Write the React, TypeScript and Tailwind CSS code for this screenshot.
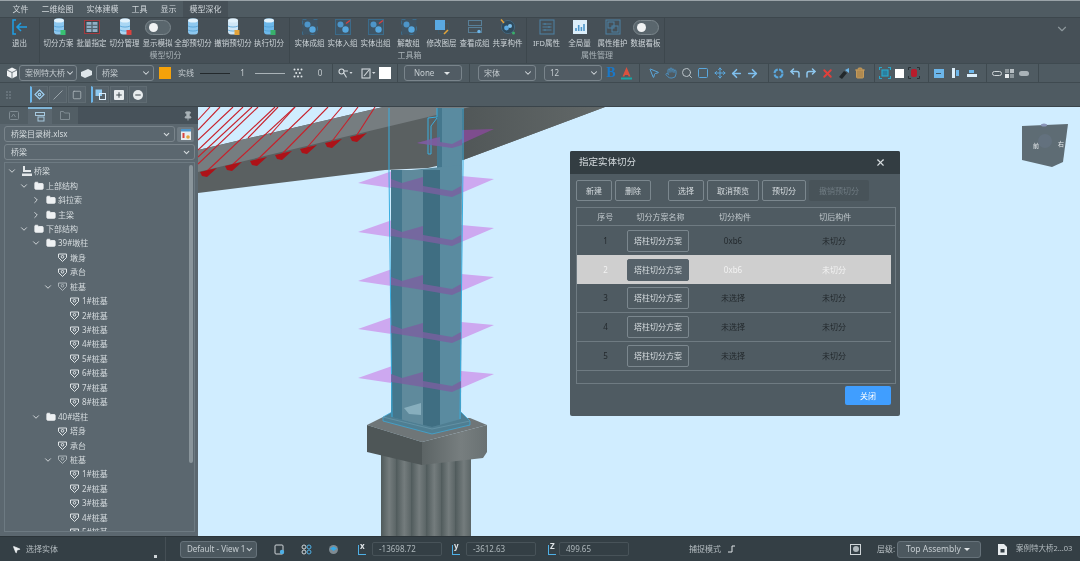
import React from 'react';
import {
  ArrowLeft, ArrowRight, ChevronDown, ChevronRight, CornerUpLeft, CornerUpRight, Folder, Hand, Minus, MousePointer2,
  Move, Pin, Plus, Search, Slash, Square, Trash2, X,
} from 'lucide-react';

function Cyl({ body = '#8ec8ef', badge }: { body?: string; badge?: string }) {
  return (
    <svg width="16" height="18" viewBox="0 0 16 18">
      <rect x="3" y="0.5" width="10" height="16" rx="3" fill={body} />
      <ellipse cx="8" cy="2.5" rx="5" ry="2" fill="#e2f2fc" />
      <path d="M3 8c2 1.4 8 1.4 10 0M3 12c2 1.4 8 1.4 10 0" stroke="#4f9fd6" strokeWidth="0.8" fill="none" />
      {badge && <rect x="9.5" y="12" width="5" height="5" fill={badge} />}
    </svg>
  );
}

function Batch() {
  return (
    <svg width="16" height="16" viewBox="0 0 16 16">
      <rect x="0.5" y="1.5" width="15" height="13" fill="#3c474d" stroke="#a33a3f" />
      <rect x="2.5" y="3" width="5" height="10" fill="#8fb0c6" />
      <rect x="8.5" y="3" width="5" height="10" fill="#8fb0c6" />
      <path d="M2.5 6.3h5M2.5 9.6h5M8.5 6.3h5M8.5 9.6h5" stroke="#3c474d" strokeWidth="0.8" />
    </svg>
  );
}

function GroupIcon({ mark }: { mark?: string }) {
  return (
    <svg width="16" height="16" viewBox="0 0 16 16">
      <rect x="0.5" y="0.5" width="15" height="15" fill="#3f5565" stroke="#3b6b8a" strokeDasharray={mark ? undefined : '4 7'} />
      <circle cx="5.5" cy="5.5" r="3" fill="#4d95c9" />
      <circle cx="10.5" cy="10.5" r="3.2" fill="#56a7de" />
      {mark && <path d="M11 4.5l4-3" stroke={mark} strokeWidth="1.4" />}
    </svg>
  );
}

function LayerIcon() {
  return (
    <svg width="16" height="16" viewBox="0 0 16 16">
      <rect x="4.5" y="4.5" width="10" height="10" fill="none" stroke="#3d5664" />
      <rect x="1" y="1" width="10" height="10" fill="#5aa9e2" />
      <path d="M10 15l4-4" stroke="#e3a33a" strokeWidth="1.6" />
    </svg>
  );
}

function ViewGroupIcon() {
  return (
    <svg width="16" height="16" viewBox="0 0 16 16" fill="none" stroke="#587f98">
      <rect x="1.5" y="1.5" width="13" height="5" />
      <rect x="1.5" y="8.5" width="13" height="5" />
      <circle cx="12" cy="12.5" r="1.7" fill="#6cb6ea" stroke="none" />
    </svg>
  );
}

function ShareIcon() {
  return (
    <svg width="18" height="18" viewBox="0 0 18 18">
      <circle cx="9" cy="9" r="6.6" fill="#2f4a5c" stroke="#43657b" />
      <circle cx="7.5" cy="10" r="2.4" fill="#5aa9e2" />
      <circle cx="11" cy="8" r="2" fill="#7cc0ec" />
      <path d="M2 1.5l3 3.5" stroke="#e3a33a" strokeWidth="1.5" />
      <circle cx="14.5" cy="15" r="1.5" fill="#38b06b" />
    </svg>
  );
}

function PropIcon({ kind }: { kind: 'ifd' | 'chart' | 'keep' }) {
  if (kind === 'chart') {
    return (
      <svg width="16" height="16" viewBox="0 0 16 16">
        <rect x="1" y="1" width="14" height="14" fill="#dceefa" />
        <path d="M4 12V9M6.7 12V6M9.4 12V8M12 12V5" stroke="#4d95c9" strokeWidth="1.6" />
      </svg>
    );
  }
  return (
    <svg width="16" height="16" viewBox="0 0 16 16" fill="none" stroke="#4d7f9f" strokeWidth="1.1">
      <rect x="1" y="1" width="14" height="14" />
      {kind === 'ifd' ? (
        <path d="M3.5 5h9M3.5 8h9M3.5 11h9M6 4v2M10 7v2M6 10v2" />
      ) : (
        <>
          <rect x="3" y="3" width="6" height="6" />
          <rect x="7" y="7" width="6" height="6" />
        </>
      )}
    </svg>
  );
}

function Toggle() {
  return (
    <div className="flex h-[15px] w-[26px] items-center rounded-full border border-[#7b868c] bg-[#5a666d] pl-[3px]">
      <div className="h-[9px] w-[9px] rounded-full bg-[#f1f3f4]" />
    </div>
  );
}

const groupOne: [string, React.ReactNode, string][] = [
  ['切分方案', <Cyl badge="#38c172" />, 'w-[33px]'],
  ['批量指定', <Batch />, 'w-[33px]'],
  ['切分管理', <Cyl body="#a9d6f3" badge="#d9423f" />, 'w-[33px]'],
  ['显示模拟', <Toggle />, 'w-[33px]'],
  ['全部预切分', <Cyl />, 'w-[38px]'],
  ['撤销预切分', <Cyl body="#cfe6f6" badge="#e3a33a" />, 'w-[42px]'],
  ['执行切分', <Cyl body="#6db8ea" badge="#38b06b" />, 'w-[30px]'],
];

const groupTwo: [string, React.ReactNode][] = [
  ['实体成组', <GroupIcon />],
  ['实体入组', <GroupIcon mark="#d9423f" />],
  ['实体出组', <GroupIcon mark="#d9423f" />],
  ['解散组', <GroupIcon />],
  ['修改图层', <LayerIcon />],
  ['查看成组', <ViewGroupIcon />],
  ['共享构件', <ShareIcon />],
];

const groupThree: [string, React.ReactNode][] = [
  ['IFD属性', <PropIcon kind="ifd" />],
  ['全局量', <PropIcon kind="chart" />],
  ['属性维护', <PropIcon kind="keep" />],
  ['数据看板', <Toggle />],
];

function RibbonItem({ label, icon, width = 'w-[33px]' }: { label: string; icon: React.ReactNode; width?: string }) {
  return (
    <div className={`flex flex-col items-center ${width}`}>
      <div className="flex h-[18px] items-center justify-center">{icon}</div>
      <div className="mt-[1px] whitespace-nowrap text-[7.5px] leading-[12px] text-[#cdd4d8]">{label}</div>
    </div>
  );
}

function RibbonGroup({ title, children, padding }: { title: string; children: React.ReactNode; padding: string }) {
  return (
    <div className={`flex h-full flex-col border-r border-[#3d474d] ${padding}`}>
      <div className="flex">{children}</div>
      <div className="text-center text-[8px] leading-[12px] text-[#aab3b8]">{title}</div>
    </div>
  );
}

function Select({ label, width, caret = 'chevron', center }: { label: string; width: string; caret?: string; center?: boolean }) {
  return (
    <div className={`flex h-[16px] shrink-0 items-center justify-between rounded-[3px] border border-[#79848b] bg-[#55616850] pl-[4px] pr-[2px] text-[8px] text-[#c5ccd0] ${width}`}>
      <span className={`whitespace-nowrap ${center ? 'pl-[5px]' : 'pl-[1px]'}`}>{label}</span>
      {caret === 'chevron' ? (
        <ChevronDown size={10} strokeWidth={2.5} className="shrink-0 text-[#d6dcdf]" />
      ) : (
        <span className="mr-[9px] h-0 w-0 border-x-[3px] border-t-[3px] border-x-transparent border-t-[#e0e4e6]" />
      )}
    </div>
  );
}

function Sep({ margin }: { margin: string }) {
  return <div className={`h-full w-px shrink-0 bg-[#3f4a50] ${margin}`} />;
}

function Slot({ width, children }: { width: string; children: React.ReactNode }) {
  return <div className={`flex shrink-0 items-center justify-center ${width}`}>{children}</div>;
}

const blue = '#5aa7dc';

function ToolbarOne() {
  return (
    <div className="flex h-[20px] shrink-0 items-center border-b border-t border-[#3f4a50] bg-[#4f5b62] text-[8px] text-[#c5ccd0]">
      <svg width="12" height="12" viewBox="0 0 12 12" className="ml-[6px] shrink-0">
        <path d="M6 .5l5 2.5v6l-5 2.5L1 9V3z" fill="#f0f3f5" />
        <path d="M1 3l5 2.5L11 3M6 5.5v6" stroke="#4f5b62" strokeWidth=".8" fill="none" />
      </svg>
      <div className="ml-[1px]"><Select label="案例特大桥" width="w-[58px]" /></div>
      <Slot width="w-[19px]">
        <svg width="11" height="9" viewBox="0 0 11 9"><path d="M0 3l7-3 4 2v4l-7 3-4-2z" fill="#dfe6ea" /></svg>
      </Slot>
      <Select label="桥梁" width="w-[58px]" />
      <div className="ml-[5px] h-[12px] w-[12px] shrink-0 bg-[#f5a20a]" />
      <span className="ml-[7px] w-[16px] shrink-0 whitespace-nowrap">实线</span>
      <div className="ml-[6px] h-px w-[30px] shrink-0 bg-[#23292c]" />
      <span className="w-[25px] shrink-0 text-center">1</span>
      <div className="h-px w-[30px] shrink-0 bg-[#aab3b8]" />
      <Slot width="w-[26px]">
        <svg width="10" height="10" viewBox="0 0 10 10" fill="#dfe4e7">
          <circle cx="1.5" cy="1.5" r="1" /><circle cx="5" cy="1.5" r="1" /><circle cx="8.5" cy="1.5" r="1" />
          <circle cx="3.2" cy="5" r="1" /><circle cx="6.8" cy="5" r="1" />
          <circle cx="1.5" cy="8.5" r="1" /><circle cx="5" cy="8.5" r="1" /><circle cx="8.5" cy="8.5" r="1" />
        </svg>
      </Slot>
      <span className="w-[18px] shrink-0 text-center">0</span>
      <Sep margin="ml-[3px]" />
      <Slot width="w-[24px]">
        <svg width="15" height="11" viewBox="0 0 15 11" fill="none" stroke="#d4dade" strokeWidth="1.1">
          <circle cx="3.5" cy="3.5" r="2.5" /><path d="M5.5 4.5l3 5M6 3h4" /><path d="M11.5 4h3l-1.5 2z" fill="#d4dade" stroke="none" />
        </svg>
      </Slot>
      <Slot width="w-[22px]">
        <svg width="15" height="11" viewBox="0 0 15 11" fill="none" stroke="#d4dade" strokeWidth="1.1">
          <rect x="1" y="1" width="8" height="9" /><path d="M3 8l5-6" /><path d="M11 4h3.5l-1.7 2z" fill="#d4dade" stroke="none" />
        </svg>
      </Slot>
      <div className="h-[12px] w-[12px] shrink-0 bg-white" />
      <Sep margin="ml-[6px]" />
      <div className="ml-[6px]"><Select label="None" width="w-[58px]" caret="tri" center /></div>
      <Sep margin="ml-[7px]" />
      <div className="ml-[8px]"><Select label="宋体" width="w-[58px]" /></div>
      <div className="ml-[8px]"><Select label="12" width="w-[58px]" /></div>
      <Slot width="w-[18px]"><span className="font-['Liberation_Serif',serif] text-[14px] font-bold leading-none text-[#1a78c8]">B</span></Slot>
      <Slot width="w-[12px]">
        <svg width="11" height="13" viewBox="0 0 11 13">
          <path d="M5.5 0l4 9.5H7.6L7 8H4l-.6 1.5H1.5z" fill="#d9523f" /><rect y="10.5" width="11" height="2" fill="#1aa6a6" />
        </svg>
      </Slot>
      <Sep margin="ml-[7px]" />
      <div className="ml-[6px] flex shrink-0">
        <Slot width="w-[16.4px]"><MousePointer2 size={12} color={blue} /></Slot>
        <Slot width="w-[16.4px]"><Hand size={12} color="#4d8fbd" /></Slot>
        <Slot width="w-[16.4px]"><Search size={12} color="#b9c2c7" /></Slot>
        <Slot width="w-[16.4px]"><Square size={12} color={blue} strokeWidth={2} /></Slot>
        <Slot width="w-[16.4px]"><Move size={12} color={blue} /></Slot>
        <Slot width="w-[16.4px]"><ArrowLeft size={13} color="#7fc0ee" strokeWidth={3} /></Slot>
        <Slot width="w-[16.4px]"><ArrowRight size={13} color="#7fc0ee" strokeWidth={3} /></Slot>
      </div>
      <Sep margin="ml-[7px]" />
      <div className="ml-[2px] flex shrink-0">
        <Slot width="w-[16.3px]">
          <svg width="11" height="11" viewBox="0 0 11 11" fill="none" stroke={blue} strokeWidth="2"><circle cx="5.5" cy="5.5" r="4" strokeDasharray="5 1.3" /></svg>
        </Slot>
        <Slot width="w-[16.3px]"><CornerUpLeft size={12} color="#8ec8ef" strokeWidth={3} /></Slot>
        <Slot width="w-[16.3px]"><CornerUpRight size={12} color="#8ec8ef" strokeWidth={3} /></Slot>
        <Slot width="w-[16.3px]"><X size={13} color="#e0403c" strokeWidth={3.5} /></Slot>
        <Slot width="w-[16.3px]">
          <svg width="11" height="11" viewBox="0 0 11 11"><path d="M0 9l5-6 3 2-5 6z" fill="#22282b" /><path d="M6 2l4-2v5z" fill="#6cb6ea" /></svg>
        </Slot>
        <Slot width="w-[16.3px]"><Trash2 size={12} color="#c49a5a" fill="#b08a50" /></Slot>
      </div>
      <Sep margin="ml-[5px]" />
      <div className="ml-[3px] flex shrink-0 items-center">
        <Slot width="w-[15px]">
          <svg width="12" height="12" viewBox="0 0 12 12" fill="none" stroke="#2ba6c9" strokeWidth="1.2">
            <path d="M0.5 3V.5H3M9 .5h2.5V3M11.5 9v2.5H9M3 11.5H.5V9" /><rect x="3" y="3" width="6" height="6" fill="#2b7f9f" />
          </svg>
        </Slot>
        <Slot width="w-[14px]"><div className="h-[9px] w-[9px] bg-white" /></Slot>
        <Slot width="w-[14px]">
          <svg width="12" height="12" viewBox="0 0 12 12"><path d="M.5 3V.5H3M9 .5h2.5V3M11.5 9v2.5H9M3 11.5H.5V9" fill="none" stroke="#2b3236" /><rect x="3" y="2" width="6" height="8" rx="2" fill="#b91c2c" /></svg>
        </Slot>
      </div>
      <Sep margin="ml-[7px]" />
      <div className="ml-[2px] flex shrink-0 items-center">
        <Slot width="w-[16.5px]"><div className="flex h-[9px] w-[10px] items-center justify-center bg-[#6cb6ea]"><div className="h-px w-[5px] bg-[#3f5565]" /></div></Slot>
        <Slot width="w-[16.5px]"><div className="flex items-center gap-[1px]"><div className="h-[10px] w-[3px] bg-[#dceefa]" /><div className="h-[6px] w-[3px] bg-[#6cb6ea]" /></div></Slot>
        <Slot width="w-[16.5px]"><div className="flex flex-col items-center gap-[1px]"><div className="h-[3px] w-[5px] bg-[#6cb6ea]" /><div className="h-[3px] w-[10px] bg-[#dceefa]" /></div></Slot>
      </div>
      <Sep margin="ml-[6px]" />
      <div className="ml-[3px] flex shrink-0 items-center">
        <Slot width="w-[13px]"><div className="h-[5px] w-[10px] rounded-full border border-[#cfd5d8]" /></Slot>
        <Slot width="w-[13px]">
          <div className="grid grid-cols-2 gap-[1px]">
            <div className="h-[4px] w-[4px] bg-[#8d979c]" /><div className="h-[4px] w-[4px] bg-[#b8c0c4]" /><div className="h-[4px] w-[4px] bg-[#e8ecee]" /><div className="h-[4px] w-[4px] bg-[#8d979c]" />
          </div>
        </Slot>
        <Slot width="w-[15px]"><div className="h-[5px] w-[10px] rounded-full bg-[#aab3b8]" /></Slot>
      </div>
      <Sep margin="ml-[7px]" />
    </div>
  );
}

function SmallButton({ children, active }: { children: React.ReactNode; active?: boolean }) {
  return (
    <div className={`flex h-[17px] w-[18px] items-center justify-center border-[#5f6b72] ${active ? 'border-l-2 border-l-[#6cb6ea]' : ''} border bg-[#56626a]`}>
      {children}
    </div>
  );
}

function ToolbarTwo() {
  return (
    <div className="flex h-[24px] shrink-0 items-center border-b border-[#3a444a] bg-[#4f5b62] pl-[6px]">
      <div className="grid w-[5px] grid-cols-2 gap-[1px]">
        {[0, 1, 2, 3, 4, 5].map((i) => <div key={i} className="h-[2px] w-[2px] bg-[#66727a]" />)}
      </div>
      <div className="ml-[19px] flex gap-px">
        <SmallButton active>
          <svg width="11" height="11" viewBox="0 0 11 11" fill="none" stroke="#9fd0f2" strokeWidth="1.2"><path d="M5.5 1l4.5 4.5L5.5 10 1 5.5z" /><circle cx="5.5" cy="5.5" r="1.2" /></svg>
        </SmallButton>
        <SmallButton><Slash size={10} color="#aab3b8" /></SmallButton>
        <SmallButton><Square size={10} color="#aab3b8" /></SmallButton>
      </div>
      <div className="ml-[5px] flex gap-px">
        <SmallButton active>
          <svg width="11" height="11" viewBox="0 0 11 11"><rect x=".5" y=".5" width="6.5" height="6.5" fill="#8ec8ef" /><rect x="4.5" y="4.5" width="6" height="6" fill="none" stroke="#dceefa" /></svg>
        </SmallButton>
        <SmallButton><div className="flex h-[10px] w-[10px] items-center justify-center rounded-[1px] bg-[#e8ecee]"><Plus size={8} color="#3c474d" strokeWidth={3} /></div></SmallButton>
        <SmallButton><div className="flex h-[10px] w-[10px] items-center justify-center rounded-full bg-[#e8ecee]"><Minus size={8} color="#3c474d" strokeWidth={3} /></div></SmallButton>
      </div>
    </div>
  );
}

type TreeRow = [number, 'open' | 'closed' | null, 'root' | 'folder' | 'group' | 'part', string];

const pileRows = (n: number): TreeRow[] =>
  Array.from({ length: n }, (_, i) => [4, null, 'part', `${i + 1}#桩基`] as TreeRow);

const treeRows: TreeRow[] = [
  [0, 'open', 'root', '桥梁'],
  [1, 'open', 'folder', '上部结构'],
  [2, 'closed', 'folder', '斜拉索'],
  [2, 'closed', 'folder', '主梁'],
  [1, 'open', 'folder', '下部结构'],
  [2, 'open', 'folder', '39#墩柱'],
  [3, null, 'part', '墩身'],
  [3, null, 'part', '承台'],
  [3, 'open', 'group', '桩基'],
  ...pileRows(8),
  [2, 'open', 'folder', '40#塔柱'],
  [3, null, 'part', '塔身'],
  [3, null, 'part', '承台'],
  [3, 'open', 'group', '桩基'],
  ...pileRows(5),
];

function TreeIcon({ kind }: { kind: TreeRow[2] }) {
  if (kind === 'folder') return <Folder size={10} color="#eef1f3" fill="#eef1f3" />;
  if (kind === 'root') {
    return (
      <svg width="10" height="10" viewBox="0 0 10 10" fill="#e4e8ea">
        <rect x="1" y="0" width="2" height="6" /><rect x="1" y="4" width="8" height="2" /><rect x="0" y="7.5" width="10" height="2.5" />
      </svg>
    );
  }
  return (
    <svg width="9" height="9" viewBox="0 0 9 9" fill="none" stroke={kind === 'part' ? '#dfe4e7' : '#aab3b8'} strokeWidth="1">
      <path d="M.5 1h8v3.5L4.5 8.5.5 4.5z" />
      <circle cx="4.5" cy="3.8" r="1.3" />
    </svg>
  );
}

function Sidebar() {
  return (
    <div className="flex h-full w-[198px] shrink-0 flex-col bg-[#5b676f] pb-[4px]">
      <div className="flex h-[17px] shrink-0 items-stretch bg-[#47525a]">
        <div className="flex w-[28px] items-center justify-center bg-[#525e65]">
          <svg width="10" height="9" viewBox="0 0 10 9" fill="none" stroke="#7f8b92"><rect x=".5" y=".5" width="9" height="8" rx="1" /><path d="M2.5 6l2-3 2 3" /></svg>
        </div>
        <div className="flex w-[24px] items-center justify-center border-t-2 border-[#7fb4d6] bg-[#5b676f]">
          <svg width="10" height="10" viewBox="0 0 10 10" fill="none" stroke="#a6c8de"><rect x=".5" y=".5" width="9" height="3" /><rect x="3" y="5" width="6" height="4" /></svg>
        </div>
        <div className="flex w-[26px] items-center justify-center bg-[#525e65]">
          <svg width="10" height="9" viewBox="0 0 10 9" fill="none" stroke="#7f8b92"><path d="M.5 8.5v-8h3l1 1.5h5v6.5z" /></svg>
        </div>
        <div className="ml-auto mr-[5px] flex items-center"><Pin size={10} color="#aab3b8" fill="#aab3b8" /></div>
      </div>
      <div className="ml-[4px] mt-[2px] flex h-[16px] shrink-0 items-center">
        <div className="flex h-[16px] w-[171px] items-center justify-between rounded-[3px] border border-[#79848b] pl-[6px] pr-[3px] text-[8px] text-[#d6dcdf]">
          <span>桥梁目录树.xlsx</span><ChevronDown size={9} strokeWidth={3} />
        </div>
        <div className="ml-[2px] flex h-[15px] w-[17px] items-center justify-center rounded-[2px] bg-[#6f7b83]">
          <svg width="10" height="11" viewBox="0 0 10 11"><rect width="10" height="11" fill="#e8ecee" /><rect width="10" height="2.5" fill="#4d95c9" /><rect x="1.5" y="4" width="2" height="5" fill="#d9423f" /><circle cx="7" cy="8" r="1.8" fill="#e3a33a" /></svg>
        </div>
      </div>
      <div className="ml-[4px] mt-[2px] flex h-[16px] w-[191px] shrink-0 items-center justify-between rounded-[3px] border border-[#79848b] pl-[6px] pr-[3px] text-[8px] text-[#d6dcdf]">
        <span>桥梁</span><ChevronDown size={9} strokeWidth={3} />
      </div>
      <div className="relative ml-[4px] mt-[2px] w-[191px] flex-1 overflow-hidden border border-[#6d7a82] pt-[1px]">
        {treeRows.map(([level, state, kind, label], i) => (
          <div key={i} className="flex h-[14.45px] items-center text-[8px] text-[#d6dcdf]" style={{ paddingLeft: 2 + 12 * level }}>
            <div className="flex w-[10px] shrink-0 justify-center">
              {state === 'open' && <ChevronDown size={10} color="#e4e8ea" />}
              {state === 'closed' && <ChevronRight size={10} color="#e4e8ea" />}
            </div>
            <div className="flex w-[17px] shrink-0 justify-center pl-[2px]"><TreeIcon kind={kind} /></div>
            <span className="whitespace-nowrap">{label}</span>
          </div>
        ))}
        <div className="absolute left-[184px] top-[2px] h-[298px] w-[4px] rounded-full bg-[#8a959b]" />
      </div>
    </div>
  );
}

// anchor on the deck and where its cable leaves the top of the view
const anchors: [number, number, number][] = [
  [205, 173, 275], [230, 167, 295], [255, 162, 312], [280, 156, 328], [305, 150, 342], [330, 144, 358], [355, 138, 375],
];
const extraCables = [
  [198, 164, 258], [198, 150, 243], [198, 140, 233], [198, 130, 220], [198, 120, 210], [248, 138, 278], [270, 135, 295], [198, 157, 252],
];
const planeYs = [182, 231, 280, 328, 377];
const pileEdges = [381, 396, 411, 426, 441, 455, 471];

function Scene() {
  return (
    <svg viewBox="198 107 882 429" className="absolute inset-0 h-full w-full">
      <defs>
        <linearGradient id="pile" x1="0" x2="1" y1="0" y2="0">
          <stop offset="0" stopColor="#4f5a5b" />
          <stop offset="0.55" stopColor="#747c7d" />
          <stop offset="1" stopColor="#5b6566" />
        </linearGradient>
        <linearGradient id="capRight" x1="0" x2="1" y1="0" y2="0">
          <stop offset="0" stopColor="#5c6465" />
          <stop offset="0.6" stopColor="#777e7f" />
          <stop offset="1" stopColor="#697172" />
        </linearGradient>
        <linearGradient id="deckRight" x1="0" x2="1" y1="0" y2="0">
          <stop offset="0" stopColor="#4e5455" />
          <stop offset="1" stopColor="#626868" />
        </linearGradient>
        <clipPath id="towerBody"><polygon points="391,160 462,160 461,419 432,427 391,417" /></clipPath>
      </defs>

      <polygon points="198,150 383,107 605,107 463,160 428,168 385,170 198,193" fill="#5a6061" />
      <polygon points="463,160 437,107 605,107" fill="url(#deckRight)" />
      <polygon points="198,150 383,107 470,107 198,172" fill="#767d80" />

      <g stroke="#c8202a" strokeWidth="1.1" fill="none">
        {anchors.map(([x, y, top]) => <path key={x} d={`M${x} ${y}L${top} 107`} />)}
        {extraCables.map(([x, y, top]) => <path key={`${x}-${y}`} d={`M${x} ${y}L${top} 107`} />)}
      </g>
      {anchors.map(([x, y]) => (
        <polygon key={x} points={`${x - 5},${y - 1} ${x + 12},${y - 5} ${x + 2},${y + 4} ${x - 3},${y + 3}`} fill="#ad1218" />
      ))}

      {/* section planes, the tower hides their middle */}
      <polygon points="417,143 463,130 494,129 452,148" fill="#7e4d8e" />
      {planeYs.map((y) => (
        <polygon key={y} points={`358,${y + 1} 395,${y - 12} 494,${y - 3} 452,${y + 15}`} fill="#cda8f0" />
      ))}

      {/* piles and cap */}
      {pileEdges.slice(0, -1).map((x, i) => (
        <rect key={x} x={x} y="455" width={pileEdges[i + 1] - x} height="81" fill="url(#pile)" />
      ))}
      <polygon points="367,425 383,417 470,418 487,425 422,442" fill="#6f7678" />
      <polygon points="367,425 422,442 422,465 367,452" fill="#4e5657" />
      <polygon points="422,442 487,425 487,452 483,458 422,465" fill="url(#capRight)" />
      <polygon points="383,417 392,412 461,412 470,421 470,425 432,434 383,421" fill="#4f7e92" stroke="#39aee0" strokeWidth="0.7" />
      <path d="M383 417L432 429L470 421" stroke="#6a99ac" strokeWidth="0.7" fill="none" />

      {/* pier */}
      <rect x="437" y="108" width="25" height="62" fill="#5a8ba0" />
      <rect x="437" y="108" width="5" height="62" fill="#44778d" />
      <g clipPath="url(#towerBody)">
        <polygon points="391,172 462,165 462,430 391,430" fill="#5a8ba0" />
        <rect x="391" y="170" width="12" height="260" fill="#44778d" />
        <rect x="402" y="170" width="21" height="260" fill="#5f8a9c" />
        <rect x="423" y="170" width="17" height="260" fill="#3f6e82" />
      </g>
      <polygon points="404,408 421,403 421,415 409,414" fill="#87aebd" />
      <path d="M389 108V172L392 417M463 108V165L460 419" stroke="#39aee0" fill="none" />
      <path d="M437 108V117L428 118V154H431V126L437 118" stroke="#39aee0" fill="none" />

      {planeYs.map((y) => (
        <polygon
          key={y}
          points={`391,${y - 3} 402,${y + 1} 423,${y - 5} 423,${y + 4} 452,${y + 9} 461,${y + 4} 461,${y + 11} 452,${y + 15} 423,${y + 10} 391,${y + 5}`}
          fill="#7a5fa0"
          opacity="0.8"
        />
      ))}
      <polygon points="417,143 440,137 440,142 452,144 462,139 462,145 452,148" fill="#7a5fa0" opacity="0.85" />

      {/* view cube */}
      <polygon points="1022,126 1068,124 1063,162 1052,167 1022,160" fill="#5e6c74" />
      <circle cx="1045" cy="141" r="7" fill="#63717e" />
      <ellipse cx="1044" cy="125" rx="3" ry="1.5" fill="#8a95b8" />
      <text x="1033" y="148" fontSize="6" fill="#e8ecee">前</text>
      <text x="1058" y="146" fontSize="6" fill="#e8ecee">右</text>
    </svg>
  );
}

const buttonBase = 'flex h-[21px] items-center justify-center rounded-[2px] border border-[#7b878e] text-[8px] text-[#d6dcdf]';

const tableRows = [
  ['1', '0xb6', '未切分'],
  ['2', '0xb6', '未切分'],
  ['3', '未选择', '未切分'],
  ['4', '未选择', '未切分'],
  ['5', '未选择', '未切分'],
];

function CutDialog() {
  return (
    <div className="absolute left-[372px] top-[44px] flex h-[265px] w-[330px] flex-col rounded-[2px] bg-[#4f5b62] font-['Noto_Sans','Noto_Sans_CJK_SC',sans-serif]">
      <div className="flex h-[23px] shrink-0 items-center justify-between rounded-t-[2px] bg-[#333d42] pl-[9px] pr-[14px]">
        <span className="text-[9.5px] text-[#d6dcdf]">指定实体切分</span>
        <X size={11} color="#d6dcdf" strokeWidth={2.5} />
      </div>
      <div className="ml-[6px] mt-[6px] flex">
        <div className={`${buttonBase} w-[36px]`}>新建</div>
        <div className={`${buttonBase} ml-[3px] w-[36px]`}>删除</div>
        <div className={`${buttonBase} ml-[17px] w-[36px]`}>选择</div>
        <div className={`${buttonBase} ml-[3px] w-[52px]`}>取消预览</div>
        <div className={`${buttonBase} ml-[3px] w-[44px]`}>预切分</div>
        <div className="ml-[3px] flex h-[21px] w-[60px] items-center justify-center rounded-[2px] bg-[#485359] text-[8px] text-[#6f7b82]">撤销预切分</div>
      </div>
      <div className="ml-[6px] mt-[6px] h-[177px] w-[320px] border border-[#6f7b82] text-[8px]">
        <div className="flex h-[18px] items-center border-b border-[#6f7b82] text-[#c0c8cc]">
          <div className="w-[50px] pl-[7px] text-center">序号</div>
          <div className="w-[68px] text-center">切分方案名称</div>
          <div className="w-[82px] text-center">切分构件</div>
          <div className="w-[120px] text-center">切后构件</div>
        </div>
        {tableRows.map(([no, part, after], i) => {
          const selected = i === 1;
          return (
            <div
              key={no}
              className={`flex h-[29px] w-[314px] items-center ${selected ? 'bg-[#cfcfcf] text-[#f2f2f2]' : 'text-[#23292d]'} ${i >= 2 ? 'border-b border-[#6f7b82]' : ''}`}
            >
              <div className="w-[50px] pl-[7px] text-center">{no}</div>
              <div
                className={`flex h-[22px] w-[62px] items-center justify-center rounded-[2px] border text-[8px] ${selected ? 'border-[#56626a] bg-[#56626a] text-[#d6dcdf]' : 'border-[#7b878e] text-[#d6dcdf]'}`}
              >
                塔柱切分方案
              </div>
              <div className="w-[88px] text-center">{part}</div>
              <div className="w-[114px] text-center">{after}</div>
            </div>
          );
        })}
      </div>
      <div className="ml-[275px] mt-[2px] flex h-[19px] w-[46px] items-center justify-center rounded-[2px] bg-[#409eff] text-[8px] text-white">关闭</div>
    </div>
  );
}

function Field({ value, width }: { value: string; width: string }) {
  return (
    <div className={`flex h-[14px] shrink-0 items-center rounded-[2px] border border-[#485359] pl-[6px] text-[8px] text-[#aeb7bb] ${width}`}>
      {value}
    </div>
  );
}

function AxisIcon({ label }: { label: string }) {
  return (
    <div className="relative h-[12px] w-[10px] shrink-0">
      <div className="absolute bottom-0 left-[1px] h-[10px] w-px bg-[#4fb0e6]" />
      <div className="absolute bottom-0 left-[1px] h-px w-[8px] bg-[#4fb0e6]" />
      <span className="absolute left-[3px] top-[-3px] text-[8px] font-bold text-[#dfe4e7]">{label}</span>
    </div>
  );
}

function StatusBar() {
  return (
    <div className="flex h-[25px] shrink-0 items-center border-t border-[#2c353a] bg-[#343f45] text-[8px] text-[#b5bdc1]">
      <div className="relative flex h-full w-[166px] shrink-0 items-center border-r border-[#454f55] pl-[12px]">
        <MousePointer2 size={9} color="#eef1f3" fill="#eef1f3" />
        <span className="ml-[5px]">选择实体</span>
        <div className="absolute bottom-[3px] right-[8px] h-[3px] w-[3px] bg-[#cfd5d8]" />
      </div>
      <div className="ml-[14px] flex h-[17px] w-[77px] shrink-0 items-center justify-between rounded-[3px] border border-[#66727a] bg-[#4c585f] pl-[6px] pr-[2px] text-[#c5ccd0]">
        <span className="whitespace-nowrap">Default - View 1</span><ChevronDown size={9} strokeWidth={3} />
      </div>
      <Slot width="w-[27px] ml-[9px]">
        <svg width="11" height="11" viewBox="0 0 11 11" fill="none" stroke="#cfd5d8"><rect x="1" y="1" width="8" height="9" rx="1" /><circle cx="8" cy="8" r="2.2" fill="#4fb0e6" stroke="none" /></svg>
      </Slot>
      <Slot width="w-[27px]">
        <svg width="11" height="11" viewBox="0 0 11 11" fill="none" stroke="#cfd5d8"><circle cx="3" cy="3" r="2" /><circle cx="8" cy="3" r="2" stroke="#4fb0e6" /><circle cx="3" cy="8" r="2" /><circle cx="8" cy="8" r="2" stroke="#4fb0e6" /></svg>
      </Slot>
      <Slot width="w-[27px]">
        <svg width="11" height="11" viewBox="0 0 11 11"><circle cx="5.5" cy="5.5" r="4.5" fill="#7f8b92" /><path d="M2 4.5l3.5-2 3.5 2-3.5 2.5z" fill="#35a9e6" /></svg>
      </Slot>
      <div className="ml-[10px]"><AxisIcon label="x" /></div>
      <div className="ml-[5px]"><Field value="-13698.72" width="w-[70px]" /></div>
      <div className="ml-[9px]"><AxisIcon label="y" /></div>
      <div className="ml-[5px]"><Field value="-3612.63" width="w-[70px]" /></div>
      <div className="ml-[11px]"><AxisIcon label="Z" /></div>
      <div className="ml-[2px]"><Field value="499.65" width="w-[70px]" /></div>
      <span className="ml-[60px] w-[35px] shrink-0 whitespace-nowrap">捕捉模式</span>
      <svg width="8" height="8" viewBox="0 0 8 8" fill="none" stroke="#dfe4e7" className="ml-[4px] shrink-0"><path d="M0 7h4V1h3" /></svg>
      <div className="ml-[114px] flex h-[11px] w-[11px] shrink-0 items-center justify-center border border-[#cfd5d8]"><div className="h-[6px] w-[6px] rounded-full bg-[#aeb7bb]" /></div>
      <span className="ml-[16px] w-[20px] shrink-0 whitespace-nowrap">层级:</span>
      <div className="flex h-[17px] w-[84px] shrink-0 items-center justify-between rounded-[3px] border border-[#66727a] bg-[#4c585f] pl-[8px] pr-[10px] text-[8.5px] text-[#c5ccd0]">
        <span>Top Assembly</span>
        <span className="h-0 w-0 border-x-[3px] border-t-[3px] border-x-transparent border-t-[#e0e4e6]" />
      </div>
      <svg width="9" height="11" viewBox="0 0 9 11" className="ml-[17px] shrink-0"><path d="M0 0h6l3 3v8H0z" fill="#e8ecee" /><rect x="2.5" y="5" width="4" height="3.5" fill="#343f45" /></svg>
      <span className="ml-[9px] whitespace-nowrap text-[7.5px]">案例特大桥2...03</span>
    </div>
  );
}

export default function App() {
  return (
    <div className="flex h-[561px] w-[1080px] flex-col overflow-hidden bg-[#4f5b62] font-['Noto_Sans','Noto_Sans_CJK_SC',sans-serif] blur-[0.4px]">
      <div className="flex h-[17px] shrink-0 items-stretch border-t border-[#9aa3a8] bg-[#4f5b62] pl-[6px] text-[8px] leading-[15px] text-[#d0d6da]">
        {['文件', '二维绘图', '实体建模', '工具', '显示'].map((m) => (
          <div key={m} className="px-[6.5px]">{m}</div>
        ))}
        <div className="bg-[#465057] px-[6.5px]">模型深化</div>
      </div>

      <div className="flex h-[46px] shrink-0 border-t border-[#3d474d] bg-[#465057]">
        <div className="flex h-full w-[40px] flex-col items-center border-r border-[#3d474d]">
          <div className="flex h-[18px] items-center">
            <svg width="16" height="16" viewBox="0 0 16 16" fill="none" stroke="#1f9fe6" strokeWidth="1.5">
              <path d="M4 1H1v14h3M15 8H5M9 4L5 8l4 4" />
            </svg>
          </div>
          <span className="mt-[1px] text-[7.5px] leading-[12px] text-[#cdd4d8]">退出</span>
        </div>
        <RibbonGroup title="模型切分" padding="w-[250px] pl-[2px]">
          {groupOne.map(([label, icon, width]) => <RibbonItem key={label} label={label} icon={icon} width={width} />)}
        </RibbonGroup>
        <RibbonGroup title="工具箱" padding="w-[237px] pl-[3px]">
          {groupTwo.map(([label, icon]) => <RibbonItem key={label} label={label} icon={icon} />)}
        </RibbonGroup>
        <RibbonGroup title="属性管理" padding="w-[138px] pl-[3px]">
          {groupThree.map(([label, icon]) => <RibbonItem key={label} label={label} icon={icon} />)}
        </RibbonGroup>
        <div className="flex flex-1 justify-end pr-[11px] pt-[4px]">
          <ChevronDown size={14} color="#8d979c" />
        </div>
      </div>

      <ToolbarOne />
      <ToolbarTwo />

      <div className="flex min-h-0 flex-1">
        <Sidebar />
        <div className="relative flex-1 overflow-hidden bg-[#d0edff]">
          <Scene />
          <CutDialog />
        </div>
      </div>

      <StatusBar />
    </div>
  );
}
